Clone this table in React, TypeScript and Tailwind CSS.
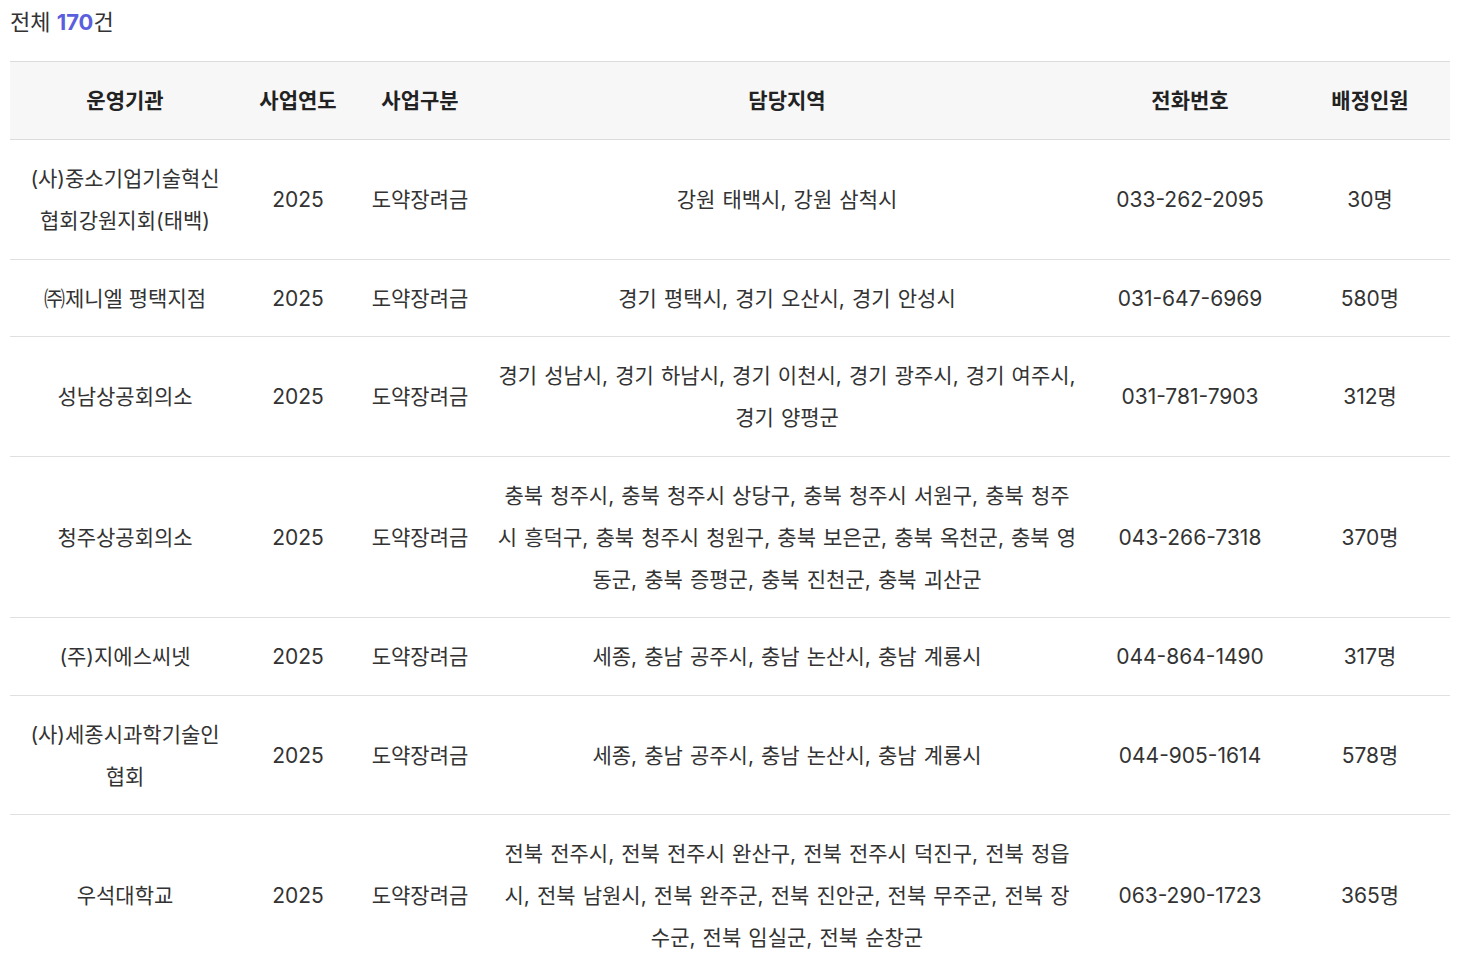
import React from 'react';

type Row = {
    org: string;
    year: string;
    kind: string;
    region: string;
    phone: string;
    count: string;
};

const rows: Row[] = [
    {
        org: '(사)중소기업기술혁신협회강원지회(태백)',
        year: '2025',
        kind: '도약장려금',
        region: '강원 태백시, 강원 삼척시',
        phone: '033-262-2095',
        count: '30명',
    },
    {
        org: '㈜제니엘 평택지점',
        year: '2025',
        kind: '도약장려금',
        region: '경기 평택시, 경기 오산시, 경기 안성시',
        phone: '031-647-6969',
        count: '580명',
    },
    {
        org: '성남상공회의소',
        year: '2025',
        kind: '도약장려금',
        region: '경기 성남시, 경기 하남시, 경기 이천시, 경기 광주시, 경기 여주시, 경기 양평군',
        phone: '031-781-7903',
        count: '312명',
    },
    {
        org: '청주상공회의소',
        year: '2025',
        kind: '도약장려금',
        region: '충북 청주시, 충북 청주시 상당구, 충북 청주시 서원구, 충북 청주시 흥덕구, 충북 청주시 청원구, 충북 보은군, 충북 옥천군, 충북 영동군, 충북 증평군, 충북 진천군, 충북 괴산군',
        phone: '043-266-7318',
        count: '370명',
    },
    {
        org: '(주)지에스씨넷',
        year: '2025',
        kind: '도약장려금',
        region: '세종, 충남 공주시, 충남 논산시, 충남 계룡시',
        phone: '044-864-1490',
        count: '317명',
    },
    {
        org: '(사)세종시과학기술인협회',
        year: '2025',
        kind: '도약장려금',
        region: '세종, 충남 공주시, 충남 논산시, 충남 계룡시',
        phone: '044-905-1614',
        count: '578명',
    },
    {
        org: '우석대학교',
        year: '2025',
        kind: '도약장려금',
        region: '전북 전주시, 전북 전주시 완산구, 전북 전주시 덕진구, 전북 정읍시, 전북 남원시, 전북 완주군, 전북 진안군, 전북 무주군, 전북 장수군, 전북 임실군, 전북 순창군',
        phone: '063-290-1723',
        count: '365명',
    },
];

const headers = ['운영기관', '사업연도', '사업구분', '담당지역', '전화번호', '배정인원'];

const cell = 'pt-[18.25px] pb-[16.25px] leading-[42px]';

const App = () => {
    return (
        <div
            className="min-h-screen bg-white px-[10px] text-[#333]"
            style={{ fontFamily: 'Inter, "Noto Sans CJK KR", sans-serif' }}
        >
            <p className="mb-[17px] pt-px text-[22px] leading-[43px] text-[#333]">
                전체 <span className="font-bold text-[#5b5fde]">170</span>건
            </p>

            <table className="w-[1440px] table-fixed border-collapse text-center text-[21px]">
                <colgroup>
                    <col className="w-[230px]" />
                    <col className="w-[116px]" />
                    <col className="w-[128px]" />
                    <col className="w-[606px]" />
                    <col className="w-[200px]" />
                    <col className="w-[160px]" />
                </colgroup>
                <thead>
                    <tr className="border-y border-[#dcdcdc] bg-[#f7f7f7]">
                        {headers.map((h) => (
                            <th key={h} className="py-[17.5px] text-[21px] font-semibold leading-[42px] text-[#222]">
                                {h}
                            </th>
                        ))}
                    </tr>
                </thead>
                <tbody>
                    {rows.map((r) => (
                        <tr key={r.org + r.phone} className="border-b border-[#e0e0e0]">
                            <td className={`px-[12px] ${cell}`} style={{ wordBreak: 'break-all' }}>
                                {r.org}
                            </td>
                            <td className={cell}>{r.year}</td>
                            <td className={cell}>{r.kind}</td>
                            <td className={`px-[13px] [word-spacing:1.2px] ${cell}`} style={{ wordBreak: 'break-all' }}>
                                {r.region}
                            </td>
                            <td className={cell}>{r.phone}</td>
                            <td className={cell}>{r.count}</td>
                        </tr>
                    ))}
                </tbody>
            </table>
        </div>
    );
};

export default App;
